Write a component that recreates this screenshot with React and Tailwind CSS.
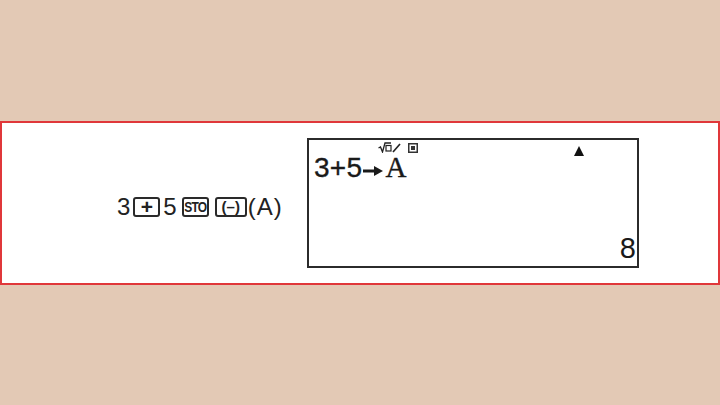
const sans = { fontFamily: '"Liberation Sans", Arial, sans-serif' }

function Key({ children, className = '' }) {
  return (
    <span className={`inline-flex items-center justify-center h-[20px] border-2 border-[#2a2a2a] rounded-[3px] text-[#222] ${className}`}>
      {children}
    </span>
  )
}

function Arrow() {
  return (
    <svg width="21" height="12" viewBox="0 0 21 12" className="mx-[1px] mb-[5px]">
      <rect x="0" y="4.5" width="12" height="3" fill="#1a1a1a" />
      <path d="M11 1 L20 6 L11 11 Z" fill="#1a1a1a" />
    </svg>
  )
}

function MathIndicator() {
  return (
    <svg width="24" height="11" viewBox="0 0 24 11">
      <path d="M0.5 6 L2.5 5 L4.5 10 L7 1 L13 1" stroke="#222" strokeWidth="1.3" fill="none" />
      <rect x="8" y="3.5" width="5" height="5.5" stroke="#222" strokeWidth="1.2" fill="none" />
      <path d="M15 10 L22 2" stroke="#222" strokeWidth="1.6" />
    </svg>
  )
}

function DisplayIndicator() {
  return (
    <svg width="10" height="10" viewBox="0 0 10 10">
      <rect x="0.75" y="0.75" width="8.5" height="8.5" stroke="#333" strokeWidth="1.5" fill="none" />
      <rect x="3" y="3" width="4" height="4" fill="#333" />
    </svg>
  )
}

export default function App() {
  return (
    <div className="w-[720px] h-[405px] bg-[#e3c9b5] flex flex-col justify-center" style={sans}>
      <div className="h-[164px] bg-white border-2 border-[#e0373a] flex items-center pl-[115px]">
        <div className="w-[190px] flex items-center text-[24px] leading-none text-[#222] pt-[8px]">
          <span>3</span>
          <Key className="w-[27px] mx-[3px]">
            <span className="text-[21px] font-bold leading-none -mt-[1px]">+</span>
          </Key>
          <span>5</span>
          <Key className="w-[27px] ml-[5px]">
            <span className="text-[12px] font-bold leading-none tracking-[-0.8px] scale-y-125">STO</span>
          </Key>
          <Key className="w-[32px] ml-[6px]">
            <span className="text-[15px] font-bold leading-none -mt-[1px]">(–)</span>
          </Key>
          <span className="ml-[1px] tracking-[1px]">(A)</span>
        </div>

        {/* calculator display */}
        <div className="relative w-[332px] h-[130px] border-2 border-[#2b2b2b] flex flex-col text-[#1a1a1a]">
          <div className="absolute left-[69px] top-[2px]">
            <MathIndicator />
          </div>
          <div className="absolute left-[99px] top-[3px]">
            <DisplayIndicator />
          </div>
          <div className="absolute left-[265px] top-[6px] w-0 h-0 border-l-[5px] border-r-[5px] border-b-[10px] border-l-transparent border-r-transparent border-b-[#111]" />

          <div className="pt-[13px] pl-[5px] flex items-end text-[28px] leading-none tracking-[0.3px] [-webkit-text-stroke:0.35px_#1a1a1a]">
            <span>3+5</span>
            <Arrow />
            <span style={{ fontFamily: '"Liberation Serif", serif' }} className="text-[29px]">A</span>
          </div>

          <div className="mt-auto pb-[3px] pr-[1px] text-right text-[29px] leading-none">
            8
          </div>
        </div>
      </div>
    </div>
  )
}
